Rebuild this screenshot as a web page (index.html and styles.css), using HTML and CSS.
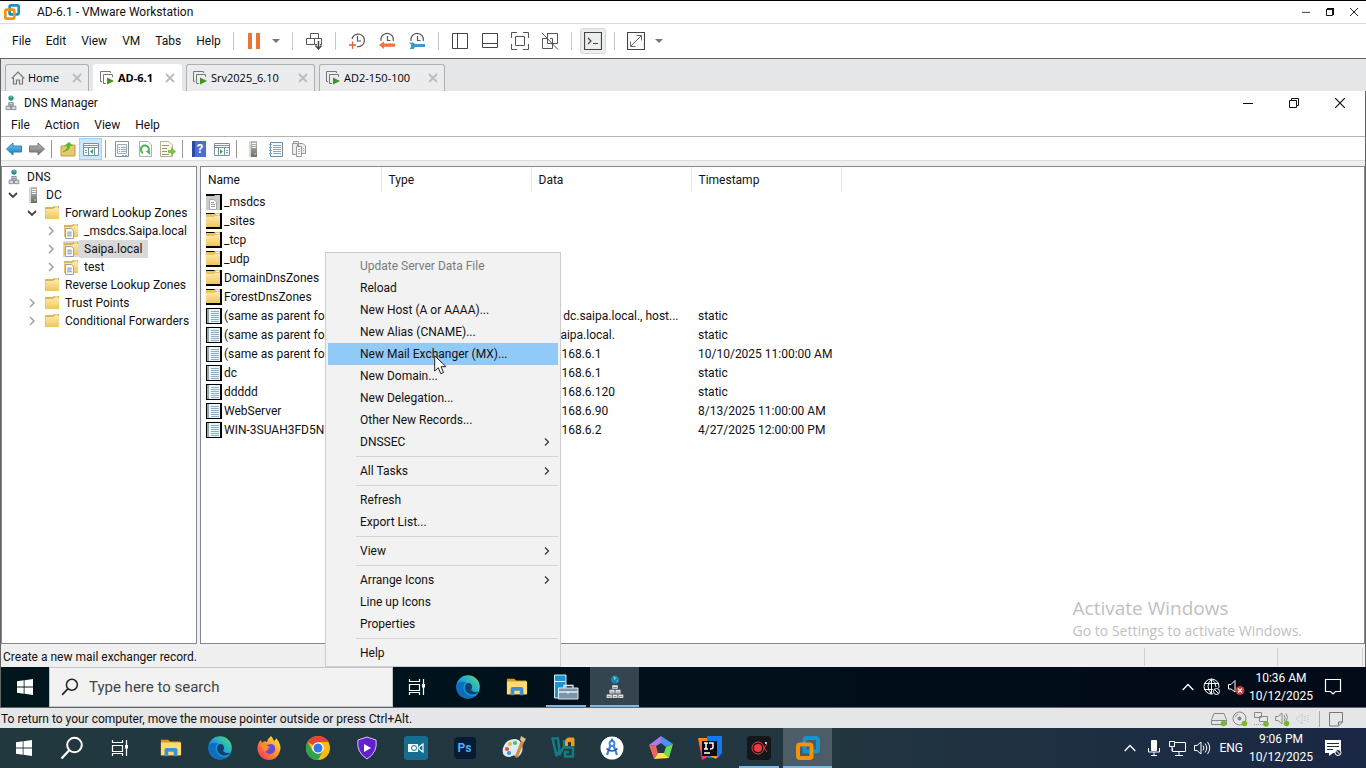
FILE: index.html
```html
<!DOCTYPE html>
<html lang="en">
<head>
<meta charset="utf-8">
<title>AD-6.1 - VMware Workstation</title>
<link rel="stylesheet" href="styles.css">
</head>
<body>
<svg class="defs" aria-hidden="true">
  <defs>
    <linearGradient id="gFolder" x1="0" y1="0" x2="0" y2="1"><stop offset="0" stop-color="#ffe9a6"/><stop offset="1" stop-color="#eec65f"/></linearGradient>
    <linearGradient id="gEdge" x1="0" y1="1" x2="1" y2="0"><stop offset="0" stop-color="#0c59a4"/><stop offset=".5" stop-color="#1a9fe0"/><stop offset="1" stop-color="#5be36b"/></linearGradient>
    <linearGradient id="gFox" x1="1" y1="0" x2="0" y2="1"><stop offset="0" stop-color="#fff04a"/><stop offset=".45" stop-color="#ff9a24"/><stop offset="1" stop-color="#f5226c"/></linearGradient>
    <linearGradient id="gIj" x1="0" y1="0" x2="0" y2="1"><stop offset="0" stop-color="#fb8b1a"/><stop offset="1" stop-color="#fe2a6e"/></linearGradient>
    <linearGradient id="gGrey" x1="0" y1="0" x2="0" y2="1"><stop offset="0" stop-color="#bdbdbd"/><stop offset="1" stop-color="#6c6c6c"/></linearGradient>
    <linearGradient id="gBlue" x1="0" y1="0" x2="0" y2="1"><stop offset="0" stop-color="#74c8f2"/><stop offset="1" stop-color="#1379bd"/></linearGradient>
  </defs>
  <symbol id="vmware" viewBox="0 0 24 24"><rect x="8.500" y="2" width="13.500" height="13.500" rx="2" fill="none" stroke="#1495c9" stroke-width="4"/><rect x="2" y="8.500" width="13.500" height="13.500" rx="2" fill="none" stroke="#f0930f" stroke-width="4"/><path d="M8.500 10.500V15.500H13.500" fill="none" stroke="#1495c9" stroke-width="3"/></symbol>
  <symbol id="close" viewBox="0 0 10 10"><path d="M0 0 10 10M10 0 0 10" stroke="currentColor" fill="none" stroke-width="1.200"/></symbol>
  <symbol id="close-soft" viewBox="0 0 10 10"><path d="M1 1 9 9M9 1 1 9" stroke="currentColor" fill="none" stroke-width="1.800"/></symbol>
  <symbol id="minimize" viewBox="0 0 10 10"><path d="M0 5.500H10" stroke="currentColor"/></symbol>
  <symbol id="restore" viewBox="0 0 10 10"><path d="M.5 2.500H7.500V9.500H.5ZM2.500 2.500V.5H9.500V7.500H7.500" stroke="currentColor" fill="none"/></symbol>
  <symbol id="restore-bold" viewBox="0 0 8 8"><path d="M.5 1.500H6.500V7.500H.5Z" fill="none" stroke="currentColor"/><path d="M1 0H8V7H6V2H1Z" fill="currentColor"/></symbol>
  <symbol id="caret" viewBox="0 0 8 4"><path d="M0 0H8L4 4Z" fill="#777"/></symbol>
  <symbol id="pause" viewBox="0 0 14 16"><path d="M1 0H5V16H1ZM9 0H13V16H9Z" fill="#ee7434"/></symbol>
  <symbol id="send-keys" viewBox="0 0 18 18"><path d="M5.500 6.500V1.500H13.500V6.500M1.500 6.500H16.500V12.500H15M9.500 12.500H1.500V6.500M9.500 6.500V12.500H12" fill="none" stroke="#555"/><path d="M13.500 9V16M10.500 13.500 13.500 17 16.500 13.500" fill="none" stroke="#444" stroke-width="1.500"/></symbol>
  <symbol id="snap-add" viewBox="0 0 18 18"><path d="M4 7A6.300 6.300 0 1 1 9 14.600M9.500 4V9H13" fill="none" stroke="#555" stroke-width="1.200"/><path d="M4.500 9.500V17M1 13H8" stroke="#e8602c" stroke-width="1.300"/></symbol>
  <symbol id="snap-back" viewBox="0 0 18 18"><path d="M3 9A6.300 6.300 0 1 1 15.300 9M9.500 4V8.500H12.500" fill="none" stroke="#555" stroke-width="1.200"/><path d="M1 13 6 9.500V11.500H17V14.700H6V17Z" fill="#f07434"/></symbol>
  <symbol id="snap-manage" viewBox="0 0 18 18"><path d="M3 9A6.300 6.300 0 1 1 15.300 9M9.500 4V8.500H12.500" fill="none" stroke="#555" stroke-width="1.200"/><path d="M1 10.500H5.500L7 12H17V15H7L5.500 17H1.500L3 15V12.500Z" fill="#3b99cf"/></symbol>
  <symbol id="view-side" viewBox="0 0 18 18"><path d="M1.500 1.500H16.500V16.500H1.500ZM6.500 1.500V16.500" fill="none" stroke="#444"/></symbol>
  <symbol id="view-bottom" viewBox="0 0 18 18"><path d="M1.500 1.500H16.500V15.500H1.500ZM1.500 11.500H16.500" fill="none" stroke="#444"/></symbol>
  <symbol id="view-full" viewBox="0 0 18 18"><path d="M.5 6V.5H6M12 .5H17.500V6M17.500 12V17.500H12M6 17.500H.5V12M4.500 4.500H13.500V13.500H4.500Z" fill="none" stroke="#555"/></symbol>
  <symbol id="view-unity" viewBox="0 0 18 18"><path d="M6 1.500H16.500V11.500H12M6.500 6.500H1.500V16.500H11.500V6.500H9M6.500 2V11.500H11M1 1 17 17.500" fill="none" stroke="#555"/></symbol>
  <symbol id="console" viewBox="0 0 18 18"><path d="M.5.500H17.500V17.500H.5ZM4 6 7 9 4 12M9 11.500H14" fill="none" stroke="#444" stroke-width="1.200"/></symbol>
  <symbol id="stretch" viewBox="0 0 18 18"><path d="M.5.500H17.500V17.500H.5Z" fill="none" stroke="#444" stroke-width="1.200"/><path d="M3.500 9.500V14.500H8.500M9.500 3.500H14.500V8.500M4 14 14 4" fill="none" stroke="#666"/></symbol>
  <symbol id="home" viewBox="0 0 14 14"><path d="M.7 7.500 7 1.200 13.300 7.500M2.500 7V13H5.500V9H8.500V13H11.500V7" fill="none" stroke="#777" stroke-width="1.200"/></symbol>
  <symbol id="vm-on" viewBox="0 0 16 16"><path d="M3 11.500H1.500V1.500H11.500V3M7 13.500H4.500V4.500H13.500V7" fill="none" stroke="#777"/><path d="M8 7.500 15 11 8 14.500Z" fill="#459322"/></symbol>
  <symbol id="dns" viewBox="0 0 16 18"><circle cx="8" cy="3.500" r="3" fill="#258f9b"/><path d="M7 1 10 2 8 4Z" fill="#80d07b"/><path d="M5.500 8.500H10.500V12.500H5.500ZM2.500 12.500H7.500V16.500H2.500ZM8.500 12.500H13.500V16.500H8.500ZM6 10.500H10" fill="#d7dbe0" stroke="#7f8792"/></symbol>
  <symbol id="server" viewBox="0 0 16 16"><path d="M5 0H12V16H5Z" fill="url(#gGrey)"/><path d="M4 0H6V16H4Z" fill="#d3dadd"/><path d="M7 2.500H11M7 4.500H11M7 6.500H11" stroke="#f5f5f5"/><path d="M9 12H11V14H9Z" fill="#7ecb4c"/></symbol>
  <symbol id="folder" viewBox="0 0 16 16"><path d="M1 2H9L10 1H15V14H1Z" fill="#dab45c"/><path d="M1.500 4H9L10 3H15V14H1.500Z" fill="url(#gFolder)"/><path d="M11 2H14" stroke="#fff8df"/></symbol>
  <symbol id="doc-small" viewBox="0 0 10 12"><path d="M.5.500H7L9.500 3V11.500H.5Z" fill="#fff" stroke="#8795a3"/><path d="M2.500 4.500H7.500M2.500 6.500H7.500M2.500 8.500H7.500" stroke="#6884a6"/></symbol>
  <symbol id="zone" viewBox="0 0 16 16"><use href="#folder" width="16" height="16"/><use href="#doc-small" x="2" y="5" width="9" height="11"/></symbol>
  <symbol id="box-folder" viewBox="0 0 16 16"><path d="M0 0H16V16H0Z" fill="#000"/><path d="M0 1H8L9 0H14V14H0Z" fill="#e9c366"/><path d="M0 4H8L9 3H14V14H0Z" fill="url(#gFolder)"/><path d="M10 1.500H13" stroke="#fff"/></symbol>
  <symbol id="box-grey" viewBox="0 0 16 16"><path d="M0 0H16V16H0Z" fill="#000"/><path d="M0 2H8L9 1H14V16H0Z" fill="#c8c9ca"/><path d="M3.500 5.500H8L10.500 8V15.500H3.500Z" fill="#fff" stroke="#aaa"/><path d="M5 8.500H8M5 10.500H9M5 12.500H9" stroke="#999"/></symbol>
  <symbol id="box-record" viewBox="0 0 16 16"><path d="M0 0H16V16H0Z" fill="#000"/><path d="M1 1H14V15H1Z" fill="#eaf4fb"/><path d="M1 1H3V15H1Z" fill="#9ba6af"/><path d="M5 3.500H13M5 5.500H13M5 7.500H13M5 9.500H13M5 11.500H13M5 13.500H13" stroke="#8fb0c9"/></symbol>
  <symbol id="open-arrow" viewBox="0 0 10 10"><path d="M1 3 5 7 9 3" fill="none" stroke="#444" stroke-width="1.800"/></symbol>
  <symbol id="shut-arrow" viewBox="0 0 10 10"><path d="M3 1 7 5 3 9" fill="none" stroke="#a0a0a0" stroke-width="1.500"/></symbol>
  <symbol id="sub-arrow" viewBox="0 0 8 8"><path d="M2 .5 5.500 4 2 7.500" fill="none" stroke="#333" stroke-width="1.200"/></symbol>
  <symbol id="back" viewBox="0 0 16 16"><path d="M.5 8 7 2V5H15.500V11H7V14Z" fill="url(#gBlue)" stroke="#2a82bb"/></symbol>
  <symbol id="forward" viewBox="0 0 16 16"><path d="M15.500 8 9 2V5H.5V11H9V14Z" fill="url(#gGrey)" stroke="#777"/></symbol>
  <symbol id="up-folder" viewBox="0 0 16 16"><path d="M1 5H6L7 4H15V15H1Z" fill="#e8c66c" stroke="#c69d43"/><path d="M3 10Q7 9 7 5H4L9 1 13 5H10Q10 10 3 11Z" fill="#59b930"/></symbol>
  <symbol id="tree-toggle" viewBox="0 0 16 16"><path d="M.5 2.500H15.500V14.500H.5Z" fill="#fff" stroke="#8090a0"/><path d="M1 4.500H15M1 6.500H15M5.500 7V14M11.500 7V14" stroke="#8090a0"/><path d="M2 9.500H4M2 11.500H4" stroke="#589ad2"/><path d="M10 8V13L7 10.500Z" fill="#43a54a"/></symbol>
  <symbol id="pane-toggle" viewBox="0 0 16 16"><path d="M.5 2.500H15.500V14.500H.5Z" fill="#fff" stroke="#8090a0"/><path d="M1 4.500H15M1 6.500H15M4.500 7V14M10.500 7V14" stroke="#8090a0"/><path d="M12 9.500H14M12 11.500H14" stroke="#589ad2"/><path d="M6 8V13L9 10.500Z" fill="#43a54a"/></symbol>
  <symbol id="props" viewBox="0 0 16 16"><path d="M1.500.500H14.500V15.500H1.500Z" fill="#fff" stroke="#84909a"/><path d="M3.500 3.500H12.500V12.500H3.500Z" fill="#f2f6fa" stroke="#a4acb2"/><path d="M5 6.500H6M7 6.500H12M5 8.500H6M7 8.500H12M5 10.500H6M7 10.500H12M8 14.500H10M11 14.500H13" stroke="#8fb0cc"/></symbol>
  <symbol id="refresh" viewBox="0 0 16 16"><path d="M2.500.500H11L14.500 4V15.500H2.500Z" fill="#fff" stroke="#adb1b4"/><path d="M6 12A4 4 0 1 1 11 11" fill="none" stroke="#4bb454" stroke-width="2"/><path d="M8.500 10H13V14Z" fill="#4bb454"/></symbol>
  <symbol id="export" viewBox="0 0 16 16"><path d="M.5.500H9L12.500 4V15.500H.5Z" fill="#fffbe8" stroke="#b8b097"/><path d="M2 4.500H9M2 7.500H7M2 10.500H7M2 13.500H9" stroke="#9a8f84"/><path d="M8 9H11V6L16 10.500 11 15V12H8Z" fill="#74c843"/></symbol>
  <symbol id="list-page" viewBox="0 0 16 16"><path d="M2.500 1.500H14.500V15.500H2.500Z" fill="#f4fbff" stroke="#6c8fab"/><path d="M5 4.500H13M5 6.500H13M5 8.500H13M5 10.500H13M5 12.500H13M1 3.500H4M1 6.500H4M1 9.500H4M1 12.500H4" stroke="#82a9c6"/></symbol>
  <symbol id="copy-page" viewBox="0 0 16 16"><path d="M2.500 2.500V.5H7.500V2.500M7.500 2.500H12L14.500 5V12.500H7.500ZM1.500 2.500H6.500V13.500H1.500Z" fill="#ececec" stroke="#999"/><path d="M5.500 5.500H10.500V15.500H5.500Z" fill="#fafafa" stroke="#999"/><path d="M7 8.500H9M7 10.500H9M7 12.500H9M12 7.500H13M12 9.500H13" stroke="#aaa"/></symbol>
  <symbol id="windows" viewBox="0 0 16 16"><path d="M0 2.300 6.700 1.300V7.600H0ZM7.500 1.200 16 0V7.600H7.500ZM0 8.400H6.700V14.700L0 13.700ZM7.500 8.400H16V16L7.500 14.800Z" fill="#fff"/></symbol>
  <symbol id="search" viewBox="0 0 24 24"><circle cx="14.500" cy="9" r="7.300" fill="none" stroke="currentColor" stroke-width="2"/><path d="M9 14.500 1.500 22.500" stroke="currentColor" stroke-width="2.200"/></symbol>
  <symbol id="task-view" viewBox="0 0 18 18"><path d="M1.500 1V3.500H11.500V1M1.500 6.500H11.500V12.500H1.500ZM1.500 17V14.500H11.500V17M15.500 1V17" fill="none" stroke="#fff" stroke-width="1.200"/><path d="M14 6H17V9.500H14Z" fill="#fff"/></symbol>
  <symbol id="explorer" viewBox="0 0 24 20"><path d="M1 1H9L11 3H22V18H1Z" fill="#dc9a16"/><path d="M1 4H23V18H1Z" fill="#ffdc72"/><path d="M5 19V12Q5 10 7 10H17Q19 10 19 12V19H15V14H9V19Z" fill="#3c91d3"/></symbol>
  <symbol id="edge" viewBox="0 0 24 24"><circle cx="12" cy="12" r="11.800" fill="url(#gEdge)"/><path d="M.4 10Q4 5 10 7.500 6 11 8 16 11 23 20 20.500 13 26 5 21.500 0 18 .4 10Z" fill="#0e6dbd"/><path d="M10.500 8.500Q15 7 16 11 16.500 13 15 15 17 18 22.500 16.500 20.500 20 15.500 19.500 9 17.500 9 12.500 9 10 10.500 8.500Z" fill="#11406a"/></symbol>
  <symbol id="firefox" viewBox="0 0 24 24"><path d="M14 0Q16 2 17 5 19 4 19 2 25 9 23 15 20 24 12 24 4 24 1 16-1 9 4 4L5 7Q7 4 10 6 11 2 14 0Z" fill="url(#gFox)"/><path d="M8 11Q12 6 17 9 20 14 16 17 11 20 8 15L12 14Z" fill="#6b48d8"/><path d="M5 9Q10 8 13 12 9 12 9 16 5 14 5 9Z" fill="#ff8b28"/></symbol>
  <symbol id="chrome" viewBox="0 0 24 24"><circle cx="12" cy="12" r="12" fill="#f9bd12"/><path d="M12 12 1.600 6A12 12 0 0 1 22.400 6H12Z" fill="#e74336"/><path d="M12 12 6.800 15 1.600 6A12 12 0 0 0 12 24L17 15Z" fill="#30a350"/><circle cx="12" cy="12" r="5.800" fill="#fff"/><circle cx="12" cy="12" r="4.500" fill="#3278e8"/></symbol>
  <symbol id="shield" viewBox="0 0 24 24"><path d="M12 1 21 4Q23 16 12 23 1 16 3 4Z" fill="#6420d0" stroke="#d9c4ff"/><path d="M9 8 16 12 9 16Z" fill="#fff"/></symbol>
  <symbol id="camera" viewBox="0 0 24 24"><rect width="24" height="24" rx="3" fill="#156d90"/><path d="M4 8H14V16H4Z" fill="#f3fafc"/><circle cx="10" cy="12" r="2.500" fill="#fff" stroke="#156d90"/><path d="M15 11 19 8V16L15 13Z" fill="none" stroke="#fff" stroke-width="1.200"/></symbol>
  <symbol id="paint" viewBox="0 0 24 24"><path d="M13 3Q4 3 1 12-1 21 8 21 12 18 16 21 22 16 20 9 18 3 13 3Z" fill="#d8edf5"/><circle cx="5" cy="13" r="2" fill="#e5483d"/><circle cx="8" cy="8" r="2" fill="#f3b635"/><circle cx="13" cy="7" r="2" fill="#53b960"/><circle cx="7" cy="17" r="2" fill="#3e91cd"/><path d="M20 2 23 4 16 21 14 22 13 20Z" fill="#d68b43"/><path d="M19 0 24 3 22 6 18 4Z" fill="#e5c18d"/></symbol>
  <symbol id="vbox" viewBox="0 0 24 24"><path d="M1.500 2.500H7L8.500 15 5.500 19.500ZM8 19.500 13 10.500V4M12 11.500H22V20.500H14V16H18" fill="none" stroke="#127d83" stroke-width="2.500" stroke-linejoin="round"/><path d="M14 10V5Q15 1.500 18 1.500H22Q23.500 1.500 23.500 3V10H20V6H17V10Z" fill="#f09a20"/></symbol>
  <symbol id="android-studio" viewBox="0 0 24 24"><circle cx="12" cy="12" r="11.500" fill="#fff"/><path d="M11 8 7 19M13 8 17 19" stroke="#4384dd" stroke-width="2.200"/><path d="M6.500 12.500Q12 17.500 17.500 12.500" fill="none" stroke="#19539d" stroke-width="1.600"/><circle cx="12" cy="7.500" r="2.500" fill="#fff" stroke="#4384dd" stroke-width="1.800"/><path d="M12 2.500V5" stroke="#19539d" stroke-width="1.500"/></symbol>
  <symbol id="pentagon" viewBox="0 0 24 24"><path d="M12 0 12 7 7 10 0 9Z" fill="#aa7de6"/><path d="M12 0 24 8 17 11 12 7Z" fill="#4b91f0"/><path d="M24 8 20 22 15 17 17 11Z" fill="#67dc4e"/><path d="M20 22 5 23 9 17H15Z" fill="#ffe24c"/><path d="M0 9 7 10 9 17 5 23Z" fill="#ee655f"/></symbol>
  <symbol id="intellij" viewBox="0 0 24 24"><path d="M0 2H10L12 20 4 24Z" fill="url(#gIj)"/><path d="M9 0H24V17L20 22H10Z" fill="#1478ed"/><path d="M12 20H20L18 23Z" fill="#f79a30"/><path d="M4 5H19V20H4Z" fill="#0b0710"/><path d="M6 7H10M8 7V13M6 13H10M11 7H15V11Q15 13 12 13M6 17H12" fill="none" stroke="#fff" stroke-width="1.500"/></symbol>
  <symbol id="recorder" viewBox="0 0 24 24"><rect width="24" height="24" rx="3" fill="#14171a"/><circle cx="11" cy="12" r="6" fill="none" stroke="#ee3b43"/><circle cx="11" cy="12" r="4" fill="#ee3b43"/><path d="M20 8 17 12 20 16" fill="none" stroke="#ee3b43"/><circle cx="19" cy="7" r="1" fill="#fff"/></symbol>
  <symbol id="server-manager" viewBox="0 0 26 26"><path d="M1.500 1H13V24H1.500Z" fill="#1b91d1" stroke="#d8eefa"/><path d="M2 7.500H12" stroke="#e3f4ff"/><path d="M5.500 14H25V25H5.500Z" fill="#7b94a7" stroke="#e3edf3"/><path d="M11 14V11.500H20V14M6 18H25M15 17V20" fill="none" stroke="#e3edf3" stroke-width="1.300"/></symbol>
  <symbol id="dns-big" viewBox="0 0 20 26"><circle cx="10" cy="5" r="4.500" fill="#187cc0"/><path d="M8 1 12 3 9 6ZM12 6 14 5 12 9Z" fill="#70d066"/><path d="M7 11H13V15H7ZM4 16H9.500V20H4ZM10.500 16H16V20H10.500ZM1 21H6.500V25H1ZM7.300 21H12.700V25H7.300ZM13.500 21H19V25H13.500Z" fill="#e4e5e7"/><path d="M8 13.500H12M5 18.500H8.500M11.500 18.500H15M2 23.500H5.500M8.500 23.500H11.500M14.500 23.500H18" stroke="#777"/></symbol>
  <symbol id="chevron-up" viewBox="0 0 12 8"><path d="M.7 7 6 1.500 11.300 7" fill="none" stroke="#fff" stroke-width="1.300"/></symbol>
  <symbol id="globe" viewBox="0 0 18 18"><circle cx="8.500" cy="8.500" r="7.500" fill="none" stroke="#fff"/><path d="M1 5.500H16M1 11.500H10M8.500 1V16M8.500 1Q1.500 8 8.500 16M8.500 1Q13 4 13 9" fill="none" stroke="#fff"/><circle cx="13.500" cy="13.500" r="4" fill="#00101c"/><circle cx="13.500" cy="13.500" r="3" fill="none" stroke="#fff"/><path d="M11.500 11.500 15.500 15.500" stroke="#fff"/></symbol>
  <symbol id="mute" viewBox="0 0 18 18"><path d="M1.500 6.500H4L8 2.500V14L4 11H1.500Z" fill="none" stroke="#fff"/><circle cx="13" cy="12.500" r="4.500" fill="#cf343b"/><path d="M11 10.500 15 14.500M15 10.500 11 14.500" stroke="#fff" stroke-width="1.200"/></symbol>
  <symbol id="speaker" viewBox="0 0 18 18"><path d="M1.500 6.500H4L8 3V15L4 11.500H1.500ZM10 6.500Q12 9 10 11.500M12 4.500Q15.500 9 12 13.500M14.500 3Q19 9 14.500 15" fill="none" stroke="currentColor"/></symbol>
  <symbol id="sound-off" viewBox="0 0 18 18"><path d="M2 9 8 4V14ZM11 6V12M14 5V13" fill="none" stroke="#bbb" stroke-dasharray="1 1"/></symbol>
  <symbol id="mic" viewBox="0 0 14 18"><rect x="4" y="1" width="6" height="11" rx="1" fill="#fff"/><path d="M1.500 9V13H12.500V9M7 13V16.500M4 16.500H10" fill="none" stroke="#fff"/></symbol>
  <symbol id="monitor" viewBox="0 0 18 18"><path d="M6 3.500H16.500V12.500H3.500V9M10 12.500V16M6 16.500H14M.5 2.500H5.500V7.500H.5ZM3 7.500V12" fill="none" stroke="#fff"/></symbol>
  <symbol id="note" viewBox="0 0 18 18"><path d="M1.500 1.500H16.500V13.500H11.500L9 16 6.500 13.500H1.500Z" fill="none" stroke="#fff" stroke-width="1.200"/></symbol>
  <symbol id="note-full" viewBox="0 0 18 18"><path d="M1 1H17V14H9L5 17V14H1Z" fill="#fff"/><path d="M3 4.500H15M3 7.500H15M3 10.500H9" stroke="#1d2d43"/><circle cx="14" cy="13.500" r="3" fill="#1d2d43" stroke="#fff"/><path d="M12 11.500 16 15.500" stroke="#fff"/></symbol>
  <symbol id="disk" viewBox="0 0 18 18"><path d="M1.500 9.500 4 3.500H14L16.500 9.500V14.500H1.500ZM1.500 10.500H16.500" fill="none" stroke="#888"/><circle cx="13.500" cy="13.500" r="2.800" fill="#78b82a"/></symbol>
  <symbol id="disc" viewBox="0 0 18 18"><circle cx="8.500" cy="8.500" r="6.500" fill="none" stroke="#888"/><circle cx="8.500" cy="8.500" r="2" fill="#888"/><path d="M4 7Q5 5 7 4" fill="none" stroke="#999"/><circle cx="13.500" cy="13.500" r="2.800" fill="#78b82a"/></symbol>
  <symbol id="net" viewBox="0 0 18 18"><path d="M2.500 2.500H9.500V7.500H2.500ZM7.500 6.500H15.500V11.500H7.500Z" fill="#e6e7e8" stroke="#888"/><path d="M2 14.500H12" stroke="#999" stroke-dasharray="1 1"/><circle cx="14" cy="14" r="2.800" fill="#78b82a"/></symbol>
  <symbol id="sound-on" viewBox="0 0 18 18"><path d="M2.500 6.500H5L9 3V14L5 10.500H2.500ZM11 5Q13 8 11 11M13 3.500Q16 8 13 11" fill="none" stroke="#888"/><circle cx="13.500" cy="13.500" r="2.800" fill="#78b82a"/></symbol>
  <symbol id="page-fold" viewBox="0 0 18 18"><path d="M2.500 2.500H15.500V12L11.500 16H2.500ZM11.500 16V12H15.500" fill="none" stroke="#777"/></symbol>
</svg>

<div class="app">
  <header class="titlebar">
    <svg class="i16"><use href="#vmware"/></svg>
    <h1 class="title">AD-6.1 - VMware Workstation</h1>
    <div class="caption">
      <button aria-label="Minimize"><svg class="i8"><use href="#minimize"/></svg></button>
      <button aria-label="Restore"><svg class="i8"><use href="#restore-bold"/></svg></button>
      <button aria-label="Close"><svg class="i8"><use href="#close"/></svg></button>
    </div>
  </header>

  <nav class="menubar">
    <div class="menus"><button>File</button><button>Edit</button><button>View</button><button>VM</button><button>Tabs</button><button>Help</button></div>
    <span class="rule"></span>
    <button class="tool pause" aria-label="Suspend"><svg class="i16"><use href="#pause"/></svg><svg class="caret"><use href="#caret"/></svg></button>
    <span class="rule"></span>
    <button class="tool lone" aria-label="Send Ctrl+Alt+Del"><svg class="i18"><use href="#send-keys"/></svg></button>
    <span class="rule"></span>
    <div class="tools">
      <button class="tool" aria-label="Take snapshot"><svg class="i18"><use href="#snap-add"/></svg></button>
      <button class="tool" aria-label="Revert snapshot"><svg class="i18"><use href="#snap-back"/></svg></button>
      <button class="tool" aria-label="Manage snapshots"><svg class="i18"><use href="#snap-manage"/></svg></button>
    </div>
    <span class="rule"></span>
    <div class="tools">
      <button class="tool" aria-label="Library"><svg class="i18"><use href="#view-side"/></svg></button>
      <button class="tool" aria-label="Thumbnail bar"><svg class="i18"><use href="#view-bottom"/></svg></button>
      <button class="tool" aria-label="Full screen"><svg class="i18"><use href="#view-full"/></svg></button>
      <button class="tool" aria-label="Unity"><svg class="i18"><use href="#view-unity"/></svg></button>
    </div>
    <span class="rule"></span>
    <button class="tool pressed" aria-label="Console view"><svg class="i18"><use href="#console"/></svg></button>
    <span class="rule"></span>
    <button class="tool stretch" aria-label="Stretch"><svg class="i18"><use href="#stretch"/></svg><svg class="caret"><use href="#caret"/></svg></button>
  </nav>

  <div class="tabs">
    <div class="tab tab-home"><svg class="i14"><use href="#home"/></svg><span>Home</span><button aria-label="Close Home"><svg class="i10"><use href="#close-soft"/></svg></button></div>
    <div class="tab tab-active"><svg class="i16"><use href="#vm-on"/></svg><span>AD-6.1</span><button aria-label="Close AD-6.1"><svg class="i10"><use href="#close-soft"/></svg></button></div>
    <div class="tab tab-srv"><svg class="i16"><use href="#vm-on"/></svg><span>Srv2025_6.10</span><button aria-label="Close Srv2025_6.10"><svg class="i10"><use href="#close-soft"/></svg></button></div>
    <div class="tab tab-ad2"><svg class="i16"><use href="#vm-on"/></svg><span>AD2-150-100</span><button aria-label="Close AD2-150-100"><svg class="i10"><use href="#close-soft"/></svg></button></div>
  </div>

  <main class="guest">
    <div class="guest-title">
      <svg class="i16"><use href="#dns"/></svg><h2 class="title">DNS Manager</h2>
      <div class="guest-caption">
        <button aria-label="Minimize DNS Manager"><svg class="i10"><use href="#minimize"/></svg></button>
        <button aria-label="Restore DNS Manager"><svg class="i10"><use href="#restore"/></svg></button>
        <button aria-label="Close DNS Manager"><svg class="i10"><use href="#close"/></svg></button>
      </div>
    </div>
    <nav class="guest-menu menus"><button>File</button><button>Action</button><button>View</button><button>Help</button></nav>
    <div class="toolbar">
      <button aria-label="Back"><svg class="i16"><use href="#back"/></svg></button>
      <button aria-label="Forward"><svg class="i16"><use href="#forward"/></svg></button>
      <span class="rule"></span>
      <button aria-label="Up one level"><svg class="i16"><use href="#up-folder"/></svg></button>
      <button class="on" aria-label="Console tree"><svg class="i16"><use href="#tree-toggle"/></svg></button>
      <span class="rule"></span>
      <button aria-label="Properties"><svg class="i16"><use href="#props"/></svg></button>
      <button aria-label="Refresh"><svg class="i16"><use href="#refresh"/></svg></button>
      <button aria-label="Export list"><svg class="i16"><use href="#export"/></svg></button>
      <span class="rule"></span>
      <button aria-label="Help topics"><span class="help-icon">?</span></button>
      <button aria-label="Action pane"><svg class="i16"><use href="#pane-toggle"/></svg></button>
      <span class="rule"></span>
      <button aria-label="Server"><svg class="i16"><use href="#server"/></svg></button>
      <button aria-label="Record"><svg class="i16"><use href="#list-page"/></svg></button>
      <button aria-label="Copy"><svg class="i16"><use href="#copy-page"/></svg></button>
    </div>

    <div class="panes">
      <div class="tree">
        <div class="node root"><svg class="i16"><use href="#dns"/></svg><span>DNS</span></div>
        <div class="node l1"><svg class="i10"><use href="#open-arrow"/></svg><svg class="i16"><use href="#server"/></svg><span>DC</span></div>
        <div class="node l2"><svg class="i10"><use href="#open-arrow"/></svg><svg class="i16"><use href="#folder"/></svg><span>Forward Lookup Zones</span></div>
        <div class="node l3"><svg class="i10"><use href="#shut-arrow"/></svg><svg class="i16"><use href="#zone"/></svg><span>_msdcs.Saipa.local</span></div>
        <div class="node l3 selected"><svg class="i10"><use href="#shut-arrow"/></svg><svg class="i16"><use href="#zone"/></svg><span>Saipa.local</span></div>
        <div class="node l3"><svg class="i10"><use href="#shut-arrow"/></svg><svg class="i16"><use href="#zone"/></svg><span>test</span></div>
        <div class="node l2"><svg class="i10"></svg><svg class="i16"><use href="#folder"/></svg><span>Reverse Lookup Zones</span></div>
        <div class="node l2"><svg class="i10"><use href="#shut-arrow"/></svg><svg class="i16"><use href="#folder"/></svg><span>Trust Points</span></div>
        <div class="node l2"><svg class="i10"><use href="#shut-arrow"/></svg><svg class="i16"><use href="#folder"/></svg><span>Conditional Forwarders</span></div>
      </div>
      <div class="list">
        <table class="records">
          <thead><tr><th class="c-name">Name</th><th class="c-type">Type</th><th class="c-data">Data</th><th class="c-time">Timestamp</th></tr></thead>
          <tbody>
            <tr><td><svg class="i16"><use href="#box-grey"/></svg>_msdcs</td><td></td><td></td><td></td></tr>
            <tr><td><svg class="i16"><use href="#box-folder"/></svg>_sites</td><td></td><td></td><td></td></tr>
            <tr><td><svg class="i16"><use href="#box-folder"/></svg>_tcp</td><td></td><td></td><td></td></tr>
            <tr><td><svg class="i16"><use href="#box-folder"/></svg>_udp</td><td></td><td></td><td></td></tr>
            <tr><td><svg class="i16"><use href="#box-folder"/></svg>DomainDnsZones</td><td></td><td></td><td></td></tr>
            <tr><td><svg class="i16"><use href="#box-folder"/></svg>ForestDnsZones</td><td></td><td></td><td></td></tr>
            <tr><td><svg class="i16"><use href="#box-record"/></svg>(same as parent folder)</td><td></td><td>[18], dc.saipa.local., host...</td><td>static</td></tr>
            <tr><td><svg class="i16"><use href="#box-record"/></svg>(same as parent folder)</td><td></td><td>dc.saipa.local.</td><td>static</td></tr>
            <tr><td><svg class="i16"><use href="#box-record"/></svg>(same as parent folder)</td><td></td><td>192.168.6.1</td><td>10/10/2025 11:00:00 AM</td></tr>
            <tr><td><svg class="i16"><use href="#box-record"/></svg>dc</td><td></td><td>192.168.6.1</td><td>static</td></tr>
            <tr><td><svg class="i16"><use href="#box-record"/></svg>ddddd</td><td></td><td>192.168.6.120</td><td>static</td></tr>
            <tr><td><svg class="i16"><use href="#box-record"/></svg>WebServer</td><td></td><td>192.168.6.90</td><td>8/13/2025 11:00:00 AM</td></tr>
            <tr><td><svg class="i16"><use href="#box-record"/></svg>WIN-3SUAH3FD5N</td><td></td><td>192.168.6.2</td><td>4/27/2025 12:00:00 PM</td></tr>
          </tbody>
        </table>
        <div class="watermark"><p class="mark-title">Activate Windows</p><p class="mark-text">Go to Settings to activate Windows.</p></div>
      </div>
    </div>
    <div class="guest-status"><span class="grow">Create a new mail exchanger record.</span><span class="cell"></span><span class="cell cell-end"></span></div>

    <div class="context" role="menu">
      <button role="menuitem" disabled>Update Server Data File</button>
      <button role="menuitem">Reload</button>
      <button role="menuitem">New Host (A or AAAA)...</button>
      <button role="menuitem">New Alias (CNAME)...</button>
      <button role="menuitem" class="hot">New Mail Exchanger (MX)...</button>
      <button role="menuitem">New Domain...</button>
      <button role="menuitem">New Delegation...</button>
      <button role="menuitem">Other New Records...</button>
      <button role="menuitem">DNSSEC<svg class="i8"><use href="#sub-arrow"/></svg></button>
      <hr>
      <button role="menuitem">All Tasks<svg class="i8"><use href="#sub-arrow"/></svg></button>
      <hr>
      <button role="menuitem">Refresh</button>
      <button role="menuitem">Export List...</button>
      <hr>
      <button role="menuitem">View<svg class="i8"><use href="#sub-arrow"/></svg></button>
      <hr>
      <button role="menuitem">Arrange Icons<svg class="i8"><use href="#sub-arrow"/></svg></button>
      <button role="menuitem">Line up Icons</button>
      <button role="menuitem">Properties</button>
      <hr>
      <button role="menuitem">Help</button>
      <svg class="pointer" viewBox="0 0 13 20"><path d="M.7.800V16L4.300 12.700 6.800 18.700 9.500 17.500 7 11.700H12Z" fill="#fff" stroke="#222"/></svg>
    </div>
  </main>

  <div class="taskbar guest-taskbar">
    <button class="slot" aria-label="Start"><svg class="i16"><use href="#windows"/></svg></button>
    <label class="search"><svg class="i18"><use href="#search"/></svg><input type="text" placeholder="Type here to search" aria-label="Search"></label>
    <button class="slot" aria-label="Task view"><svg class="i18"><use href="#task-view"/></svg></button>
    <div class="pinned">
      <button class="slot wide" aria-label="Edge"><svg class="i24"><use href="#edge"/></svg></button>
      <button class="slot wide" aria-label="File Explorer"><svg class="i22"><use href="#explorer"/></svg></button>
      <button class="slot wide running" aria-label="Server Manager"><svg class="i26"><use href="#server-manager"/></svg></button>
      <button class="slot wide current" aria-label="DNS Manager"><svg class="i24"><use href="#dns-big"/></svg></button>
    </div>
    <div class="tray">
      <svg class="chev"><use href="#chevron-up"/></svg><svg class="i18"><use href="#globe"/></svg><svg class="i18"><use href="#mute"/></svg>
      <div class="clock"><span>10:36 AM</span><span>10/12/2025</span></div>
      <svg class="i18 notify"><use href="#note"/></svg>
    </div>
  </div>

  <footer class="vm-status">
    <span class="grow">To return to your computer, move the mouse pointer outside or press Ctrl+Alt.</span>
    <svg class="i18"><use href="#disk"/></svg><svg class="i18"><use href="#disc"/></svg><svg class="i18"><use href="#net"/></svg><svg class="i18"><use href="#sound-on"/></svg><svg class="i18"><use href="#sound-off"/></svg>
    <span class="rule"></span>
    <svg class="i18"><use href="#page-fold"/></svg>
  </footer>

  <div class="taskbar host-taskbar">
    <button class="slot" aria-label="Host start"><svg class="i16"><use href="#windows"/></svg></button>
    <button class="slot" aria-label="Host search"><svg class="i24"><use href="#search"/></svg></button>
    <button class="slot" aria-label="Host task view"><svg class="i18"><use href="#task-view"/></svg></button>
    <div class="pinned">
      <button class="slot wide" aria-label="Explorer"><svg class="i22"><use href="#explorer"/></svg></button>
      <button class="slot wide" aria-label="Microsoft Edge"><svg class="i24"><use href="#edge"/></svg></button>
      <button class="slot wide" aria-label="Firefox"><svg class="i24"><use href="#firefox"/></svg></button>
      <button class="slot wide" aria-label="Chrome"><svg class="i24"><use href="#chrome"/></svg></button>
      <button class="slot wide" aria-label="Player"><svg class="i24"><use href="#shield"/></svg></button>
      <button class="slot wide" aria-label="Camera"><svg class="i24"><use href="#camera"/></svg></button>
      <button class="slot wide" aria-label="Photoshop"><span class="ps-icon">Ps</span></button>
      <button class="slot wide" aria-label="Paint"><svg class="i24"><use href="#paint"/></svg></button>
      <button class="slot wide" aria-label="VirtualBox"><svg class="i24"><use href="#vbox"/></svg></button>
      <button class="slot wide" aria-label="Android Studio"><svg class="i24"><use href="#android-studio"/></svg></button>
      <button class="slot wide" aria-label="Pentagon"><svg class="i24"><use href="#pentagon"/></svg></button>
      <button class="slot wide" aria-label="IntelliJ IDEA"><svg class="i24"><use href="#intellij"/></svg></button>
      <button class="slot wide running" aria-label="Recorder"><svg class="i24"><use href="#recorder"/></svg></button>
      <button class="slot wide current" aria-label="VMware Workstation"><svg class="i24"><use href="#vmware"/></svg></button>
    </div>
    <div class="tray">
      <svg class="chev"><use href="#chevron-up"/></svg><svg class="i18"><use href="#mic"/></svg><svg class="i18"><use href="#monitor"/></svg><svg class="i18"><use href="#speaker"/></svg>
      <span class="lang">ENG</span>
      <div class="clock"><span>9:06 PM</span><span>10/12/2025</span></div>
      <svg class="i18 notify"><use href="#note-full"/></svg>
    </div>
  </div>
</div>
</body>
</html>
```
FILE: styles.css
```css
* { box-sizing: border-box; }

body {
  margin: 0;
  font: 12px/18px Roboto, "Open Sans", sans-serif;
  color: #111;
  background: #fff;
}

button {
  margin: 0;
  padding: 0;
  border: 0;
  background: none;
  color: inherit;
  font: inherit;
}

svg { display: block; flex: none; }
.defs { position: absolute; width: 0; height: 0; }
.i8 { width: 8px; height: 8px; }
.i10 { width: 10px; height: 10px; }
.i14 { width: 14px; height: 14px; }
.i16 { width: 16px; height: 16px; }
.i18 { width: 18px; height: 18px; }
.i22 { width: 22px; height: 22px; }
.i24 { width: 24px; height: 24px; }
.i26 { width: 26px; height: 26px; }
.caret { width: 8px; height: 4px; }
.grow { flex: 1; }
.title { margin: 0; font: inherit; }

.app { display: flex; flex-direction: column; min-height: 100vh; }

.titlebar {
  display: flex;
  align-items: center;
  gap: 17px;
  height: 24px;
  padding: 0 8px 0 4px;
  border-top: 1px solid #000;
  border-bottom: 1px solid #ddd;
}
.caption { display: flex; gap: 16px; margin-left: auto; }

.menubar {
  display: flex;
  align-items: center;
  height: 35px;
  padding: 0 12px 1px;
  border-bottom: 1px solid #646464;
}
.menus { display: flex; gap: 15px; }
.menubar .rule { width: 1px; height: 18px; margin: 0 12px; background: #c8c8c8; }
.tool { display: flex; align-items: center; justify-content: center; gap: 10px; }
.tools { display: flex; gap: 12px; }
.pressed {
  width: 26px;
  height: 26px;
  margin: 0 -4px;
  border: 1px solid #d8d8d8;
  border-radius: 3px;
  background: #eceeed;
}

.tabs {
  display: flex;
  align-items: flex-end;
  gap: 4px;
  height: 32px;
  padding: 0 4px;
  border-left: 1px solid #646464;
  background: #e5e6e8;
}
.tab {
  display: flex;
  align-items: center;
  gap: 3px;
  height: 27px;
  padding: 0 6px 0 5px;
  border: 1px solid #adb0b0;
  border-bottom: 0;
  border-radius: 3px 3px 0 0;
  background: #ebeced;
  color: #000;
  font: 11px/18px "Open Sans", "Noto Sans", sans-serif;
}
.tab button { margin-left: auto; color: #bcbcbc; }
.tab-home { width: 84px; }
.tab-active { width: 89px; border-color: #fff; background: #fff; font-weight: 700; }
.tab-srv { width: 129px; }
.tab-ad2 { width: 126px; }

.guest {
  position: relative;
  display: flex;
  flex: 1;
  flex-direction: column;
  border-left: 1px solid #646464;
  border-right: 1px solid #646464;
}
.guest-title { display: flex; align-items: center; gap: 5px; height: 24px; padding: 0 20px 0 2px; }
.guest-caption { display: flex; gap: 36px; margin-left: auto; }
.guest-menu { height: 22px; padding: 1px 10px 2px; border-bottom: 1px solid #b4b4b4; }
.toolbar {
  display: flex;
  align-items: center;
  height: 24px;
  padding: 1px 1px 0;
  border-bottom: 1px solid #ddd;
}
.toolbar button { display: grid; place-items: center; width: 23px; height: 22px; }
.toolbar .on { background: #cce8ff; box-shadow: inset 0 0 0 1px #99d1ff; }
.toolbar .rule { width: 1px; height: 18px; margin: 0 4px 0 3px; background: #999; }
.help-icon {
  width: 14px;
  height: 16px;
  border-left: 3px solid #2b49a7;
  background: #4b6fd0;
  color: #fff;
  font-size: 13px;
  font-weight: 700;
  line-height: 16px;
}

.panes {
  display: flex;
  flex: 1;
  gap: 3px;
  padding-top: 5px;
  background: #f0f0f0;
}
.tree { width: 196px; padding-top: 1px; border: 1px solid #828790; background: #fff; }
.node { display: flex; align-items: center; height: 18px; white-space: nowrap; }
.node .i10 { margin-right: 7px; }
.node span { padding: 0 5px; }
.root { padding-left: 4px; }
.l1 { padding-left: 6px; }
.l2 { padding-left: 25px; }
.l3 { padding-left: 44px; }
.selected .i16, .selected span { background-color: #d9d9d9; }

.list { position: relative; flex: 1; border: 1px solid #828790; background: #fff; }
.records { width: 640px; table-layout: fixed; border-collapse: collapse; }
.records th {
  height: 25px;
  padding: 0 7px;
  border-right: 1px solid #e5e5e5;
  font-weight: 400;
  text-align: left;
}
.records td { height: 19px; padding: 0 7px; line-height: 18px; white-space: nowrap; }
.records td:first-child { display: flex; align-items: center; gap: 2px; padding-left: 5px; }
.c-name { width: 180px; }
.c-type { width: 150px; }
.c-data { width: 160px; }
.c-time { width: 150px; }

.watermark {
  position: absolute;
  right: 62px;
  bottom: 2px;
  color: #bfbfbf;
  font-family: "Open Sans", "Noto Sans", sans-serif;
}
.watermark p { margin: 0; }
.mark-title { font-size: 19px; line-height: 26px; }
.mark-text { font-size: 14px; line-height: 20px; }

.guest-status {
  display: flex;
  align-items: stretch;
  height: 23px;
  padding: 4px 2px 1px;
  background: #f0f0f0;
}
.cell { width: 133px; border-left: 1px solid #d2d2d2; }
.cell-end { width: 86px; border-right: 1px solid #d2d2d2; }

.context {
  position: absolute;
  top: 161px;
  left: 324px;
  width: 236px;
  padding: 2px;
  border: 1px solid #ccc;
  background: #f2f2f2;
}
.context button {
  display: flex;
  align-items: center;
  justify-content: space-between;
  width: 100%;
  height: 22px;
  padding: 0 7px 0 32px;
  text-align: left;
}
.context button:disabled { color: #7a7a7a; }
.context .hot { background: #91c9f7; }
.context hr { height: 1px; margin: 3px 0 3px 28px; border: 0; background: #d4d4d4; }
.pointer { position: absolute; top: 102px; left: 108px; width: 13px; height: 20px; }

.taskbar { display: flex; height: 40px; color: #fff; }
.slot { display: grid; place-items: center; width: 48px; height: 40px; color: #fff; }
.wide { width: 49px; }
.pinned { display: flex; margin-left: 2px; }
.guest-taskbar {
  height: 41px;
  border-left: 1px solid #646464;
  border-bottom: 1px solid #646464;
  background: linear-gradient(90deg, #00161d, #020a18);
}
.search {
  display: flex;
  align-items: center;
  gap: 10px;
  width: 344px;
  padding-left: 11px;
  border: 1px solid #c4c4c4;
  background: #f2f2f2;
  color: #222;
}
.search input {
  flex: 1;
  min-width: 0;
  padding: 0;
  border: 0;
  outline: 0;
  background: none;
  font: 15px/20px Roboto, "Open Sans", sans-serif;
}
.search input::placeholder { color: #444; opacity: 1; }
.running { background: linear-gradient(#76b9ed, #76b9ed) center bottom / 40px 2px no-repeat; }
.current { background: linear-gradient(#76b9ed, #76b9ed) center bottom / 100% 2px no-repeat #34454f; }

.tray { display: flex; align-items: center; gap: 6px; margin-left: auto; padding-right: 24px; }
.chev { width: 12px; height: 8px; margin-right: 3px; }
.clock { display: flex; flex-direction: column; align-items: center; width: 60px; line-height: 18px; }
.notify { margin-left: 7px; }

.vm-status {
  display: flex;
  align-items: center;
  gap: 3px;
  height: 20px;
  padding: 1px 21px 0 1px;
  background: #e5e6e8;
}
.vm-status .rule { width: 1px; height: 16px; margin: 0 4px; background: #aaa; }

.host-taskbar { background: linear-gradient(90deg, #21383f, #22363f 60%, #1a2745); }
.host-taskbar .current { background-color: #4c5d67; }
.lang { margin: 0 2px; }
.ps-icon {
  width: 22px;
  height: 22px;
  border-radius: 4px;
  background: #061c34;
  color: #4baefc;
  font-weight: 700;
  line-height: 22px;
}
```
